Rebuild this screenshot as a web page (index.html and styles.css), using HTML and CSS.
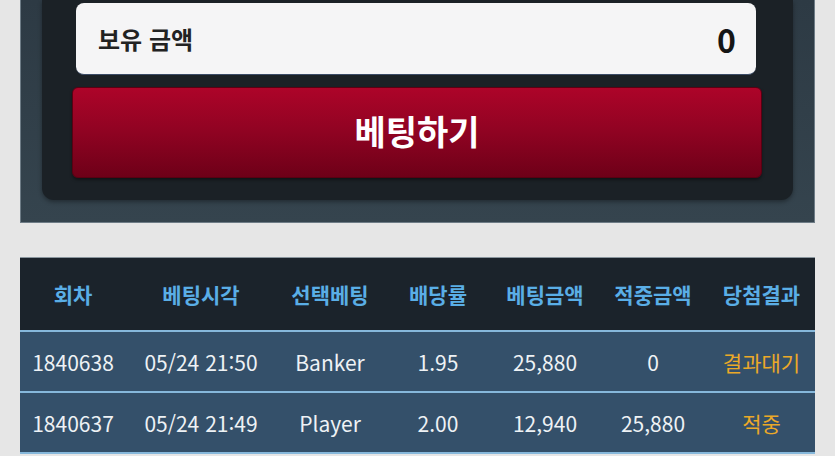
FILE: index.html
```html
<!DOCTYPE html>
<html lang="ko">
<head>
<meta charset="utf-8">
<link rel="stylesheet" href="styles.css">
</head>
<body>
<div class="panel">
  <div class="inner">
    <div class="balance">
      <span class="balance-label">보유 금액</span>
      <span class="balance-value">0</span>
    </div>
    <button class="bet-btn">베팅하기</button>
  </div>
</div>
<table class="history">
  <colgroup>
    <col class="c1"><col class="c2"><col class="c3"><col class="c4"><col class="c5"><col class="c6"><col class="c7">
  </colgroup>
  <thead>
    <tr>
      <th>회차</th><th>베팅시각</th><th>선택베팅</th><th>배당률</th><th>베팅금액</th><th>적중금액</th><th>당첨결과</th>
    </tr>
  </thead>
  <tbody>
    <tr>
      <td>1840638</td><td>05/24 21:50</td><td>Banker</td><td>1.95</td><td>25,880</td><td>0</td><td class="status">결과대기</td>
    </tr>
    <tr>
      <td>1840637</td><td>05/24 21:49</td><td>Player</td><td>2.00</td><td>12,940</td><td>25,880</td><td class="status">적중</td>
    </tr>
  </tbody>
</table>
</body>
</html>
```
FILE: styles.css
```css
html, body {
  margin: 0;
  padding: 0;
}
body {
  background: #e6e6e6;
  font-family: "Noto Sans CJK KR", "Noto Sans", sans-serif;
  overflow: hidden;
  height: 456px;
}
.panel {
  margin-left: 20px;
  width: 795px;
  box-sizing: border-box;
  background: linear-gradient(#2d3a44, #35444e);
  border: 1px solid #6e7c86;
  border-top: none;
  padding: 0 21px 22px 21px;
}
.inner {
  background: #1b2126;
  border-radius: 0 0 12px 12px;
  box-shadow: 0 2px 4px rgba(0, 0, 0, 0.35);
  padding: 3px 0 22px 0;
  display: flex;
  flex-direction: column;
}
.balance {
  margin: 0 37px 0 34px;
  height: 72px;
  background: #f5f5f6;
  border-radius: 8px;
  display: flex;
  align-items: center;
  justify-content: space-between;
  padding: 0 20px 0 22px;
  box-sizing: border-box;
  border-bottom: 1px solid #3b4b66;
}
.balance-label {
  font-size: 24px;
  font-weight: 700;
  color: #222;
}
.balance-value {
  font-size: 32px;
  font-weight: 700;
  color: #151515;
}
.bet-btn {
  margin: 12px 31px 0 30px;
  height: 91px;
  border: 1px solid #5a0012;
  border-radius: 6px;
  background: linear-gradient(#ad0429, #8f0322 50%, #6e0018);
  color: #fff;
  font-family: "Noto Sans CJK KR", "Noto Sans", sans-serif;
  font-size: 34px;
  font-weight: 700;
  padding: 0 0 4px 0;
  box-shadow: 0 2px 3px rgba(0, 0, 0, 0.4);
}
.history {
  margin: 34px 0 0 20px;
  width: 795px;
  border-collapse: collapse;
  table-layout: fixed;
  border-top: 1px solid #8a969e;
}
.c1 { width: 106px; }
.c2 { width: 150px; }
.c3 { width: 108px; }
.c4 { width: 108px; }
.c5 { width: 106px; }
.c6 { width: 110px; }
.c7 { width: 107px; }
.history th {
  background: #1b232b;
  color: #5aaee6;
  font-size: 21px;
  font-weight: 700;
  height: 72px;
  padding: 0;
  text-align: center;
  border-bottom: 2px solid #86b8db;
}
.history td {
  background: #34506a;
  color: #eef2f5;
  font-size: 21px;
  font-weight: 400;
  height: 59px;
  padding: 0;
  text-align: center;
  border-bottom: 2px solid #86b8db;
  white-space: nowrap;
}
.history td.status {
  color: #eba928;
}
```
